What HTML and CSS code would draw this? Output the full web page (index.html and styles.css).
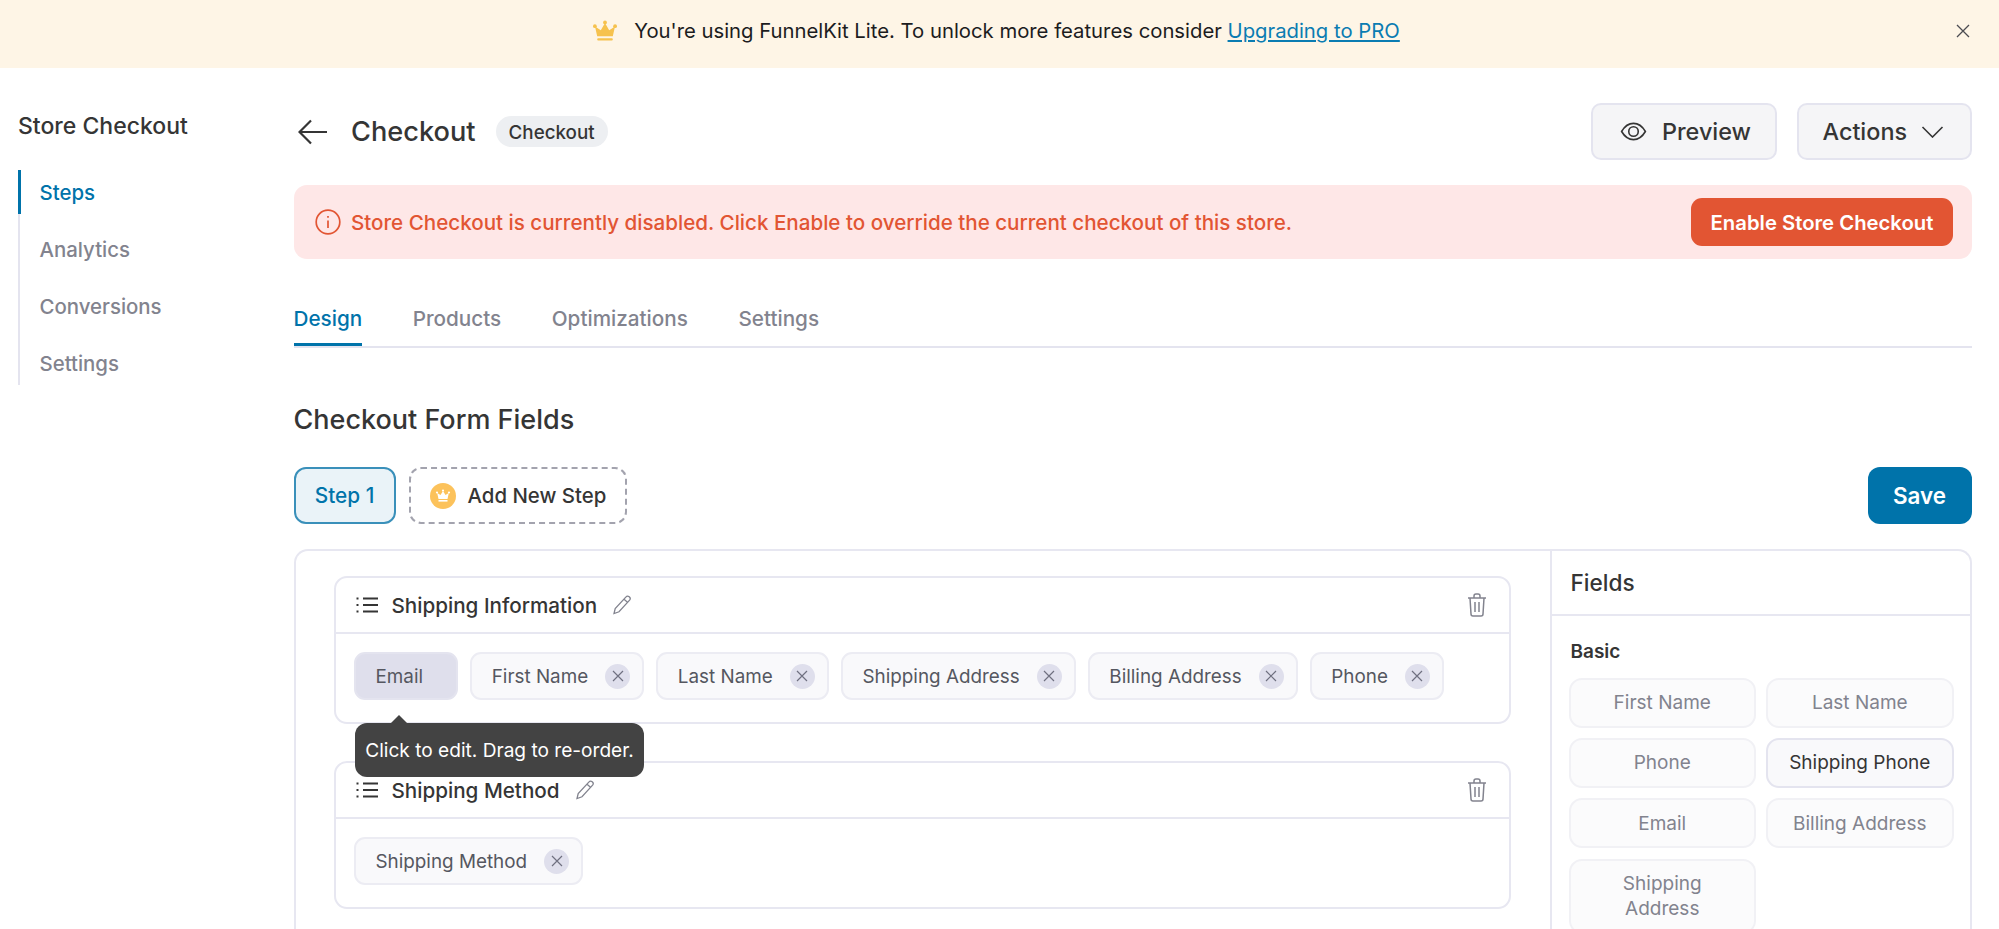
FILE: index.html
```html
<!DOCTYPE html>
<html lang="en">
<head>
<meta charset="utf-8">
<title>Store Checkout</title>
<link rel="stylesheet" href="styles.css">
</head>
<body>
<div class="banner">
  <span></span>
  <div class="banner-msg">
    <svg class="crown" viewBox="0 0 24 22"><circle cx="12" cy="2.4" r="1.9"/><circle cx="1.9" cy="6.2" r="1.9"/><circle cx="22.1" cy="6.2" r="1.9"/><path d="M12 3l4.2 7.2L22 6.5l-2.2 9.8H4.200L2 6.500l5.800 3.700z"/><rect x="4.200" y="18.300" width="15.600" height="2.200" rx="1"/></svg>
    <span>You're using FunnelKit Lite. To unlock more features consider <a href="#" class="link">Upgrading to PRO</a></span>
  </div>
  <svg class="close" viewBox="0 0 14 14"><path d="M1 1l12 12M13 1L1 13"/></svg>
</div>
<div class="main">
  <aside class="sidebar">
    <div class="side-title">Store Checkout</div>
    <nav class="side-nav">
      <a class="side-item active">Steps</a>
      <a class="side-item">Analytics</a>
      <a class="side-item">Conversions</a>
      <a class="side-item">Settings</a>
    </nav>
  </aside>
  <main class="content">
    <header class="head">
      <svg class="back" viewBox="0 0 30 26"><path d="M29 13H2M13 1.500L1.500 13 13 24.500"/></svg>
      <h1 class="title">Checkout</h1>
      <span class="badge">Checkout</span>
      <div class="head-actions">
        <button class="btn btn-preview"><svg class="eye" viewBox="0 0 28 20"><path d="M1.500 10C5 4 9 1.500 14 1.500S23 4 26.500 10C23 16 19 18.500 14 18.500S5 16 1.500 10z"/><circle cx="14" cy="10" r="5"/></svg>Preview</button>
        <button class="btn btn-actions">Actions<svg class="chev" viewBox="0 0 22 12"><path d="M1 1l10 10L21 1"/></svg></button>
      </div>
    </header>
    <div class="alert">
      <svg class="info" viewBox="0 0 26 26"><circle cx="13" cy="13" r="11.800"/><path d="M13 11.500v7.500M13 7v1.800"/></svg>
      <span class="alert-text">Store Checkout is currently disabled. Click Enable to override the current checkout of this store.</span>
      <button class="btn-enable">Enable Store Checkout</button>
    </div>
    <div class="tabs">
      <a class="tab active">Design</a>
      <a class="tab">Products</a>
      <a class="tab">Optimizations</a>
      <a class="tab">Settings</a>
    </div>
    <h2 class="section">Checkout Form Fields</h2>
    <div class="toolbar">
      <button class="step">Step 1</button>
      <button class="add-step">
        <svg class="crown-badge" viewBox="0 0 26 26"><circle cx="13" cy="13" r="13" class="cb-bg"/><g class="cb-fg"><circle cx="13" cy="7.500" r="1.100"/><circle cx="7" cy="9.500" r="1.100"/><circle cx="19" cy="9.500" r="1.100"/><path d="M13 8l2.500 4 3.300-2-1.300 6h-9L7.200 10l3.300 2z"/><rect x="8.500" y="17" width="9" height="1.600"/></g></svg>
        Add New Step
      </button>
      <button class="save">Save</button>
    </div>
    <section class="panel">
      <div class="canvas">
        <div class="card">
          <div class="card-head">
            <svg class="list" viewBox="0 0 22 18"><path d="M7 2.500h15M7 9h15M7 15.500h15"/><path class="dots" d="M.5 2.500h2M.5 9h2M.5 15.500h2"/></svg>
            <span class="card-title">Shipping Information</span>
            <svg class="pencil" viewBox="0 0 20 20"><path d="M13.800 2.200a2.400 2.400 0 0 1 3.800 3L7 16.800 2 18.500l1.200-5zM12 4.300l3.800 3.200"/></svg>
            <svg class="trash" viewBox="0 0 20 24"><path d="M1 5h18M7 5V3a2 2 0 0 1 2-2h2a2 2 0 0 1 2 2v2M3 5l1 16a2 2 0 0 0 2 2h8a2 2 0 0 0 2-2l1-16M8 9v10M12 9v10"/></svg>
          </div>
          <div class="card-body">
            <div class="chip chip-active">Email
              <div class="tooltip">Click to edit. Drag to re-order.</div>
            </div>
            <div class="chip">First Name<span class="x"><svg viewBox="0 0 12 12"><path d="M1 1l10 10M11 1L1 11"/></svg></span></div>
            <div class="chip">Last Name<span class="x"><svg viewBox="0 0 12 12"><path d="M1 1l10 10M11 1L1 11"/></svg></span></div>
            <div class="chip">Shipping Address<span class="x"><svg viewBox="0 0 12 12"><path d="M1 1l10 10M11 1L1 11"/></svg></span></div>
            <div class="chip">Billing Address<span class="x"><svg viewBox="0 0 12 12"><path d="M1 1l10 10M11 1L1 11"/></svg></span></div>
            <div class="chip">Phone<span class="x"><svg viewBox="0 0 12 12"><path d="M1 1l10 10M11 1L1 11"/></svg></span></div>
          </div>
        </div>
        <div class="card">
          <div class="card-head">
            <svg class="list" viewBox="0 0 22 18"><path d="M7 2.500h15M7 9h15M7 15.500h15"/><path class="dots" d="M.5 2.500h2M.5 9h2M.5 15.500h2"/></svg>
            <span class="card-title">Shipping Method</span>
            <svg class="pencil" viewBox="0 0 20 20"><path d="M13.800 2.200a2.400 2.400 0 0 1 3.800 3L7 16.800 2 18.500l1.200-5zM12 4.300l3.800 3.200"/></svg>
            <svg class="trash" viewBox="0 0 20 24"><path d="M1 5h18M7 5V3a2 2 0 0 1 2-2h2a2 2 0 0 1 2 2v2M3 5l1 16a2 2 0 0 0 2 2h8a2 2 0 0 0 2-2l1-16M8 9v10M12 9v10"/></svg>
          </div>
          <div class="card-body">
            <div class="chip">Shipping Method<span class="x"><svg viewBox="0 0 12 12"><path d="M1 1l10 10M11 1L1 11"/></svg></span></div>
          </div>
        </div>
      </div>
      <aside class="fields">
        <div class="fields-head">Fields</div>
        <div class="fields-body">
          <div class="fields-label">Basic</div>
          <div class="fields-grid">
            <div class="field">First Name</div>
            <div class="field">Last Name</div>
            <div class="field">Phone</div>
            <div class="field on">Shipping Phone</div>
            <div class="field">Email</div>
            <div class="field">Billing Address</div>
            <div class="field">Shipping Address</div>
          </div>
        </div>
      </aside>
    </section>
  </main>
</div>
</body>
</html>
```
FILE: styles.css
```css
* { box-sizing: border-box; }
html, body { margin: 0; height: 929px; overflow: hidden; background: #fff; }
body { font-family: Inter, "Liberation Sans", sans-serif; color: #353535; }
button { font-family: inherit; cursor: pointer; }

.banner {
  height: 68px;
  background: #fef5e6;
  display: grid;
  grid-template-columns: 1fr auto 1fr;
  align-items: center;
  padding: 0 29px 7px 23px;
  font-size: 20.3px;
  color: #1c1c1e;
}
.banner-msg { display: flex; align-items: center; gap: 17px; }
.crown { width: 24px; height: 22px; fill: #f6c24e; }
.link { color: #0a7cb2; text-decoration: underline; }
.close { width: 14px; height: 14px; justify-self: end; fill: none; stroke: #4c4c52; stroke-width: 1.3; }

.main { display: flex; height: 861px; overflow: hidden; }
.sidebar { width: 293.5px; flex: none; padding: 44px 0 0 18px; }
.side-title { font-size: 23px; font-weight: 500; line-height: 28px; color: #353535; }
.side-nav {
  margin-top: 30px;
  width: 100px;
  border-left: 2px solid #e4e4ef;
  display: flex;
  flex-direction: column;
  gap: 13px;
}
.side-item {
  height: 44px;
  line-height: 46px;
  margin-left: -2px;
  padding-left: 18.5px;
  border-left: 3px solid transparent;
  font-size: 20.4px;
  font-weight: 500;
  color: #82838e;
  white-space: nowrap;
}
.side-item.active { color: #0073aa; border-left-color: #0073aa; }

.content { flex: 1; min-width: 0; padding: 35px 27.5px 0 0; }
.head { display: flex; align-items: center; height: 57px; }
.back { width: 30px; height: 26px; margin-left: 4.5px; fill: none; stroke: #353535; stroke-width: 2.2; }
.title { margin: 0 0 0 23px; font-size: 27.2px; font-weight: 500; line-height: 36px; color: #353535; }
.badge {
  margin-left: 20px;
  height: 31px;
  line-height: 33px;
  padding: 0 13px;
  border-radius: 16px;
  background: #edeff2;
  font-size: 18.8px;
  font-weight: 500;
  color: #353535;
}
.head-actions { margin-left: auto; display: flex; gap: 19.5px; }
.btn {
  height: 57px;
  display: flex;
  align-items: center;
  background: #f5f5f7;
  border: 2px solid #e4e4ef;
  border-radius: 10px;
  font-size: 23.4px;
  font-weight: 500;
  color: #353535;
}
.btn-preview { width: 186px; padding: 0 0 0 26.5px; gap: 15.5px; }
.btn-actions { width: 175px; padding: 0 0 0 24px; gap: 14px; }
.eye { width: 27px; height: 19px; fill: none; stroke: #353535; stroke-width: 1.7; }
.chev { width: 23px; height: 12px; fill: none; stroke: #353535; stroke-width: 1.6; }

.alert {
  margin-top: 25px;
  height: 74px;
  display: flex;
  align-items: center;
  padding: 0 18.5px 0 21.5px;
  background: #fee7e7;
  border-radius: 13px;
}
.info { width: 26px; height: 26px; fill: none; stroke: #e25533; stroke-width: 1.7; }
.alert-text { margin-left: 10px; padding-top: 1px; font-size: 20.6px; font-weight: 500; color: #e25533; }
.btn-enable {
  margin-left: auto;
  width: 262px;
  height: 48px;
  border: 0;
  border-radius: 11px;
  background: #e25533;
  color: #fff;
  font-size: 20.3px;
  font-weight: 600;
}

.tabs { margin-top: 46px; display: flex; gap: 50.5px; border-bottom: 2px solid #e4e4ef; }
.tab {
  line-height: 28px;
  padding-bottom: 10px;
  border-bottom: 3px solid transparent;
  font-size: 20.7px;
  font-weight: 500;
  color: #82838e;
}
.tab.active { color: #0073aa; border-bottom-color: #0073aa; }
.section { margin: 56px 0 0; font-size: 27px; font-weight: 500; line-height: 32px; color: #353535; }

.toolbar { margin-top: 31px; display: flex; align-items: center; gap: 13px; }
.step {
  width: 102px;
  height: 57px;
  background: #eaf3f8;
  border: 2px solid #3a90ba;
  border-radius: 12px;
  color: #0073aa;
  font-size: 20.8px;
  font-weight: 500;
}
.add-step {
  width: 218px;
  height: 57px;
  display: flex;
  align-items: center;
  gap: 12px;
  padding: 0 0 0 19px;
  background: #fff;
  border: 2px dashed #a3a3ae;
  border-radius: 12px;
  color: #353535;
  font-size: 20.4px;
  font-weight: 500;
}
.crown-badge { width: 26px; height: 26px; flex: none; }
.cb-bg { fill: #fcc25b; }
.cb-fg { fill: #fff; }
.save {
  margin-left: auto;
  width: 104px;
  height: 57px;
  border: 0;
  border-radius: 12px;
  background: #0073aa;
  color: #fff;
  font-size: 22.4px;
  font-weight: 600;
}

.panel {
  margin-top: 25px;
  height: 382px;
  display: flex;
  border: 2px solid #e7e7f1;
  border-bottom: 0;
  border-radius: 14px 14px 0 0;
  overflow: hidden;
}
.canvas { flex: 1; min-width: 0; padding: 25px 39px 0 38px; display: flex; flex-direction: column; gap: 37.5px; }
.card { border: 2px solid #e7e7f1; border-radius: 13px; height: 147.5px; flex: none; }
.card-head {
  height: 56px;
  display: flex;
  align-items: center;
  padding: 0 22px 0 20px;
  border-bottom: 2px solid #e7e7f1;
}
.list { width: 22px; height: 18px; flex: none; fill: none; stroke: #353535; stroke-width: 2; }
.dots { stroke-width: 2.2; }
.card-title { margin-left: 14px; font-size: 20.65px; font-weight: 500; color: #353535; }
.pencil { width: 20px; height: 20px; margin-left: 15px; fill: none; stroke: #82838e; stroke-width: 1.3; }
.trash { width: 20px; height: 24px; margin-left: auto; fill: none; stroke: #82838e; stroke-width: 1.5; }
.card-body { display: flex; gap: 12.2px; padding: 18px 18.5px 0; }
.chip {
  position: relative;
  height: 48px;
  display: flex;
  align-items: center;
  gap: 17px;
  padding: 0 12px 0 19.5px;
  background: #f9f9fb;
  border: 2px solid #ececf3;
  border-radius: 11px;
  font-size: 18.85px;
  color: #555760;
  white-space: nowrap;
}
.chip-active { background: #dfdfec; border-color: #e4e4ef; padding-right: 19px; width: 104px; }
.x {
  width: 25px;
  height: 25px;
  display: flex;
  align-items: center;
  justify-content: center;
  border-radius: 50%;
  background: #dfdfec;
}
.x svg { width: 12px; height: 12px; fill: none; stroke: #6f7080; stroke-width: 1.2; }
.tooltip {
  position: absolute;
  left: -1px;
  top: 68.5px;
  width: 289px;
  height: 54px;
  border-radius: 12px;
  background: #434343;
  color: #fff;
  font-size: 19.1px;
  line-height: 54px;
  text-align: center;
  z-index: 2;
}
.tooltip::before {
  content: "";
  position: absolute;
  left: 35px;
  top: -8px;
  border: 9px solid transparent;
  border-top: 0;
  border-bottom-color: #434343;
}

.fields { width: 420px; flex: none; border-left: 2px solid #e7e7f1; overflow: hidden; }
.fields-head {
  height: 65px;
  line-height: 63px;
  padding-left: 19px;
  border-bottom: 2px solid #e7e7f1;
  font-size: 22.6px;
  font-weight: 500;
  color: #353535;
}
.fields-body { padding: 22px 16px 0 17px; }
.fields-label { font-size: 19px; font-weight: 600; line-height: 28px; padding-left: 2px; color: #353535; }
.fields-grid { margin-top: 12px; display: grid; grid-template-columns: repeat(2, minmax(0, 1fr)); gap: 10.2px 10px; }
.field {
  min-height: 50px;
  display: flex;
  align-items: center;
  justify-content: center;
  padding: 10px 20px;
  background: #fbfbfc;
  border: 2px solid #f1f1f5;
  border-radius: 13px;
  font-size: 19px;
  line-height: 25.5px;
  color: #82838e;
  text-align: center;
  white-space: nowrap;
}
.field:last-child { white-space: normal; padding: 10px 30px; }
.field.on { background: #f9f9fb; border-color: #e4e4ef; color: #353535; padding: 0; }
```
